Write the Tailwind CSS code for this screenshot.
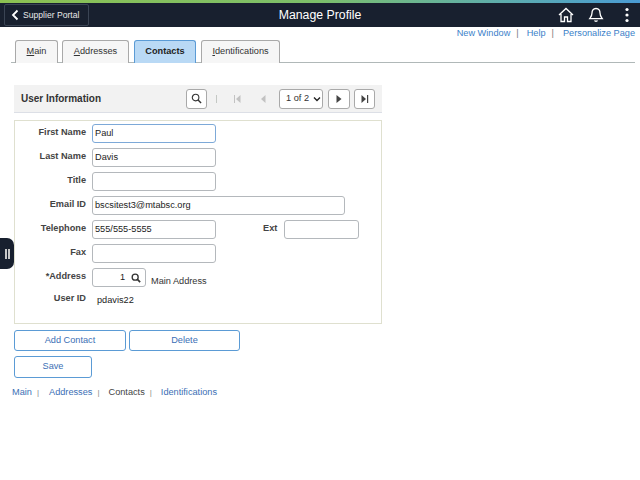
<!doctype html>
<html>
<head>
  <meta charset="UTF-8">
  <title>Manage Profile</title>
  <script src="https://cdn.jsdelivr.net/npm/@tailwindcss/browser@4"></script>
</head>
<body class="relative w-[640px] h-[480px] overflow-hidden bg-white font-['Liberation_Sans',Arial,sans-serif] text-[9.2px] text-[#333]">
  <!-- banner -->
  <div class="h-[3px] bg-gradient-to-r from-[#8cc152] via-[#7cbf6a] to-[#4a9bd4]"></div>
  <div class="h-6 bg-[#18202f] flex items-center text-white relative">
    <a class="ml-1 w-[85px] h-[22px] border border-[#3a4454] rounded-[2px] flex items-center">
      <svg class="ml-1.5 w-2 h-3" viewBox="0 0 8 12"><path d="M6.500 1.500 2 6l4.500 4.500" fill="none" stroke="white" stroke-width="1.800"/></svg>
      <span class="ml-[4px] text-[8.6px] text-[#e8e8e8] whitespace-nowrap">Supplier Portal</span>
    </a>
    <div class="absolute left-0 right-0 text-center text-[12.3px] leading-6">Manage Profile</div>
    <div class="ml-auto flex items-center">
      <svg class="w-4 h-4" viewBox="0 0 16 16"><path d="M1 8 8 1.500 15 8M3 7v7.500h3.500V10h3v4.500H13V7" fill="none" stroke="white" stroke-width="1.300"/></svg>
      <svg class="ml-[14px] w-4 h-4" viewBox="0 0 16 16"><path d="M8 1.500c-3 0-4 2.200-4 4.500 0 3-1.500 4.500-2.300 5.700h12.600C13.500 10.500 12 9 12 6c0-2.300-1-4.500-4-4.500ZM6.500 13.500c.4 1 2.600 1 3 0" fill="none" stroke="white" stroke-width="1.300"/></svg>
      <svg class="ml-[21px] mr-[11px] w-1 h-4" viewBox="0 0 4 16"><circle cx="2" cy="2.500" r="1.600" fill="white"/><circle cx="2" cy="8" r="1.600" fill="white"/><circle cx="2" cy="13.500" r="1.600" fill="white"/></svg>
    </div>
  </div>
  <!-- page links -->
  <div class="h-[13px] flex justify-end items-center pr-[5px] text-[#3b7fc9] leading-[13px]">
    <span>New Window</span><span class="ml-[6px] text-[#777]">|</span>
    <span class="ml-[8px]">Help</span><span class="ml-[6px] text-[#777]">|</span>
    <span class="ml-[9px]">Personalize Page</span>
  </div>
  <!-- tabs -->
  <div class="ml-[11px] mr-[5px] h-[23px] border-b border-[#b0b8b8] flex pl-1">
    <div class="w-[43px] h-[23px] bg-[#f6f6f6] border border-b-0 border-[#a9a9a9] rounded-t-[3px] flex items-center justify-center"><span><u>M</u>ain</span></div>
    <div class="ml-[4px] w-[67px] h-[23px] bg-[#f6f6f6] border border-b-0 border-[#a9a9a9] rounded-t-[3px] flex items-center justify-center"><span><u>A</u>ddresses</span></div>
    <div class="ml-[5px] w-[62px] h-[23px] bg-[#b9d9f5] border border-b-0 border-[#5b9bd5] rounded-t-[3px] flex items-center justify-center font-bold text-[#222]">Contacts</div>
    <div class="ml-[5px] w-[79px] h-[23px] bg-[#f6f6f6] border border-b-0 border-[#a9a9a9] rounded-t-[3px] flex items-center justify-center"><span><u>I</u>dentifications</span></div>
  </div>
  <!-- section header -->
  <div class="mt-[22px] ml-[14px] w-[368px] h-[28px] bg-[#f2f2f2] border-b border-[#dcdfe6] flex items-center">
    <span class="ml-[7px] w-[165px] font-bold text-[10px] text-[#333]">User Information</span>
    <button class="w-[21px] h-[20px] bg-white border border-[#a9a9a9] rounded-[3px] flex items-center justify-center">
      <svg class="w-[11px] h-[11px]" viewBox="0 0 12 12"><circle cx="5" cy="5" r="3.600" fill="none" stroke="#333" stroke-width="1.200"/><path d="M7.700 7.700 11 11" stroke="#333" stroke-width="1.600"/></svg>
    </button>
    <span class="ml-[9px] w-px h-[8px] bg-[#c4c8c4]"></span>
    <svg class="ml-[16px] w-2 h-2" viewBox="0 0 8 8"><path d="M1 0h1v8H1zM7.500 0v8L3 4z" fill="#c2c2c2"/></svg>
    <svg class="ml-[18px] w-2 h-2" viewBox="0 0 8 8"><path d="M6.500 0v8L2 4z" fill="#c2c2c2"/></svg>
    <div class="ml-[12px] w-[44px] h-[20px] bg-white border border-[#a9a9a9] rounded-[3px] flex items-center pl-[6px] whitespace-nowrap">
      <span>1 of 2</span>
      <svg class="ml-[4px] w-2 h-[6px]" viewBox="0 0 8 6"><path d="M1 1.500 4 4.500 7 1.500" fill="none" stroke="#222" stroke-width="1.400"/></svg>
    </div>
    <button class="ml-[5px] w-[22px] h-[20px] bg-white border border-[#a9a9a9] rounded-[3px] flex items-center justify-center">
      <svg class="w-2 h-2" viewBox="0 0 8 8"><path d="M1.500 0v8L6.500 4z" fill="#444"/></svg>
    </button>
    <button class="ml-[4px] w-[21px] h-[20px] bg-white border border-[#a9a9a9] rounded-[3px] flex items-center justify-center">
      <svg class="w-2 h-2" viewBox="0 0 8 8"><path d="M.5 0v8L5 4zM6 0h1.200v8H6z" fill="#444"/></svg>
    </button>
  </div>
  <!-- form box -->
  <div class="mt-[7px] ml-[14px] w-[368px] h-[204px] border border-[#dfe0cf] pt-[3px]">
    <div class="flex h-[19px] mb-[5px]">
      <label class="w-[71px] text-right font-bold text-[#444] leading-[17px]">First Name</label>
      <div class="ml-[6px] w-[124px] h-[19px] border border-[#7da9d8] rounded-[3px] pl-[2px] leading-[17px] text-[#222]">Paul</div>
    </div>
    <div class="flex h-[19px] mb-[5px]">
      <label class="w-[71px] text-right font-bold text-[#444] leading-[17px]">Last Name</label>
      <div class="ml-[6px] w-[124px] h-[19px] border border-[#b4b8bc] rounded-[3px] pl-[2px] leading-[17px] text-[#222]">Davis</div>
    </div>
    <div class="flex h-[19px] mb-[5px]">
      <label class="w-[71px] text-right font-bold text-[#444] leading-[17px]">Title</label>
      <div class="ml-[6px] w-[124px] h-[19px] border border-[#b4b8bc] rounded-[3px]"></div>
    </div>
    <div class="flex h-[19px] mb-[5px]">
      <label class="w-[71px] text-right font-bold text-[#444] leading-[17px]">Email ID</label>
      <div class="ml-[6px] w-[253px] h-[19px] border border-[#b4b8bc] rounded-[3px] pl-[2px] leading-[17px] text-[#222]">bscsitest3@mtabsc.org</div>
    </div>
    <div class="flex h-[19px] mb-[5px]">
      <label class="w-[71px] text-right font-bold text-[#444] leading-[17px]">Telephone</label>
      <div class="ml-[6px] w-[124px] h-[19px] border border-[#b4b8bc] rounded-[3px] pl-[2px] leading-[17px] text-[#222]">555/555-5555</div>
      <label class="ml-[47px] w-[15px] font-bold text-[#444] leading-[17px]">Ext</label>
      <div class="ml-[6px] w-[75px] h-[19px] border border-[#b4b8bc] rounded-[3px]"></div>
    </div>
    <div class="flex h-[19px] mb-[5px]">
      <label class="w-[71px] text-right font-bold text-[#444] leading-[17px]">Fax</label>
      <div class="ml-[6px] w-[124px] h-[19px] border border-[#b4b8bc] rounded-[3px]"></div>
    </div>
    <div class="flex h-[19px] mb-[3px]">
      <label class="w-[71px] text-right font-bold text-[#444] leading-[17px]">*Address</label>
      <div class="ml-[6px] w-[54px] h-[19px] border border-[#b4b8bc] rounded-[3px] flex items-center justify-end pr-[4px] text-[#222]">
        <span>1</span>
        <svg class="ml-[6px] w-[10px] h-[10px]" viewBox="0 0 12 12"><circle cx="5" cy="5" r="3.600" fill="none" stroke="#333" stroke-width="1.600"/><path d="M7.700 7.700 11 11" stroke="#333" stroke-width="2"/></svg>
      </div>
      <span class="ml-[5px] mt-[5px] leading-[16px] whitespace-nowrap">Main Address</span>
    </div>
    <div class="flex h-[19px]">
      <label class="w-[71px] text-right font-bold text-[#444] leading-[17px]">User ID</label>
      <span class="ml-[11px] mt-[2px] leading-[16px] text-[#222]">pdavis22</span>
    </div>
  </div>
  <!-- buttons -->
  <div class="mt-[6px] ml-[14px] flex gap-[3px]">
    <button class="w-[112px] h-[21px] border border-[#5b9bd5] rounded-[3px] text-[#3b6fb5]">Add Contact</button>
    <button class="w-[111px] h-[21px] border border-[#5b9bd5] rounded-[3px] text-[#3b6fb5]">Delete</button>
  </div>
  <button class="block mt-[5px] ml-[14px] w-[78px] h-[22px] border border-[#5b9bd5] rounded-[3px] text-[#3b6fb5]">Save</button>
  <!-- bottom links -->
  <div class="mt-[8px] ml-[12px] flex items-center leading-[13px] text-[#3b6fb5]">
    <span>Main</span><span class="ml-[5px] text-[#888] text-[8px]">|</span>
    <span class="ml-[10px]">Addresses</span><span class="ml-[5px] text-[#888] text-[8px]">|</span>
    <span class="ml-[9px] text-[#444]">Contacts</span><span class="ml-[5px] text-[#888] text-[8px]">|</span>
    <span class="ml-[9px]">Identifications</span>
  </div>
  <!-- side handle -->
  <div class="absolute left-0 top-[238px] w-[14px] h-[31px] bg-[#18202f] rounded-r-[7px] flex items-center justify-center gap-[1px]">
    <span class="w-[2px] h-[10px] bg-[#c8c8c8]"></span><span class="w-[2px] h-[10px] bg-[#c8c8c8]"></span>
  </div>
</body>
</html>
